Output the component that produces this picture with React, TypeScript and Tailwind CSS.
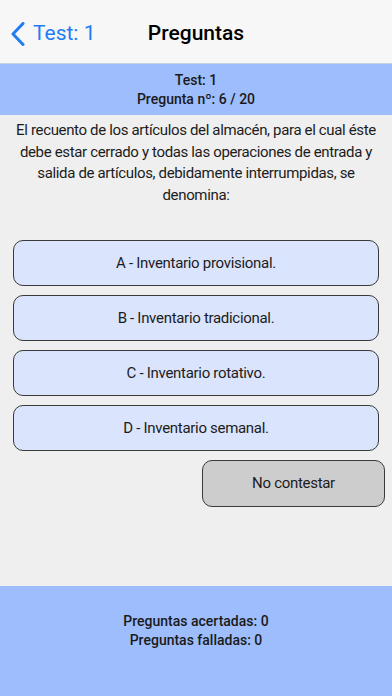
const options = [
  "A - Inventario provisional.",
  "B - Inventario tradicional.",
  "C - Inventario rotativo.",
  "D - Inventario semanal.",
];

export default function App() {
  return (
    <div
      className="flex h-[696px] w-[392px] flex-col overflow-hidden bg-[#efefef] text-[#1a1a1a]"
      style={{ fontFamily: 'Roboto, "Liberation Sans", Arial, sans-serif' }}
    >
      {/* Barra de navegación */}
      <div className="relative flex h-[64px] shrink-0 items-center border-b border-[#c8cfdd] bg-[#f7f7f7] pt-[4px]">
        <button type="button" className="flex items-center gap-[7px] pl-[10px] text-[#1f7cf3]">
          <svg width="16" height="24" viewBox="0 0 16 24" fill="none" aria-hidden="true">
            <path d="M13 1.5 L3 12 L13 22.5" stroke="currentColor" strokeWidth="3" strokeLinecap="round" strokeLinejoin="round" />
          </svg>
          <span className="text-[21px]">Test: 1</span>
        </button>
        <div className="pointer-events-none absolute inset-x-0 top-[4px] bottom-0 flex items-center justify-center">
          <span className="text-[21px] font-medium text-black">Preguntas</span>
        </div>
      </div>

      {/* Cabecera azul */}
      <div className="flex h-[51px] shrink-0 flex-col items-center justify-center bg-[#9dbdfc] text-[14px] font-medium leading-[19px]">
        <div>Test: 1</div>
        <div>Pregunta nº: 6 / 20</div>
      </div>

      {/* Pregunta */}
      <p className="px-[10px] pt-[5px] text-center text-[15px] leading-[21.5px] tracking-[-0.35px] text-[#1c1c1c]">
        El recuento de los artículos del almacén, para el cual éste debe estar cerrado y todas las operaciones de entrada
        y salida de artículos, debidamente interrumpidas, se denomina:
      </p>

      {/* Respuestas */}
      <div className="mt-[34px] flex flex-col gap-[9px] px-[13px]">
        {options.map((o) => (
          <button
            key={o}
            type="button"
            className="h-[46px] w-full rounded-[10px] border border-[#3a3a3a] bg-[#dae4fd] text-[15px] tracking-[-0.3px] text-[#1c1c1c]"
          >
            {o}
          </button>
        ))}
      </div>
      <div className="mt-[9px] flex justify-end pr-[7px]">
        <button
          type="button"
          className="h-[47px] w-[183px] rounded-[10px] border border-[#3a3a3a] bg-[#cdcdcd] text-[15px] tracking-[-0.3px] text-[#1c1c1c]"
        >
          No contestar
        </button>
      </div>

      {/* Pie con resultados */}
      <div className="mt-auto flex h-[110px] shrink-0 flex-col items-center bg-[#9dbdfc] pt-[26px] text-[14px] font-medium leading-[19px]">
        <div>Preguntas acertadas: 0</div>
        <div>Preguntas falladas: 0</div>
      </div>
    </div>
  );
}
